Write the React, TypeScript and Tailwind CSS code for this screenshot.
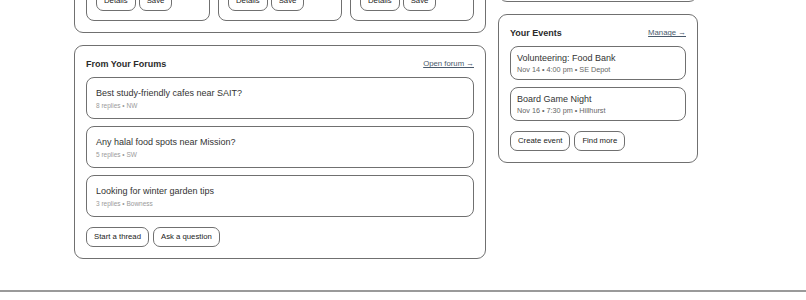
const forumThreads = [
  { title: "Best study-friendly cafes near SAIT?", meta: "8 replies • NW" },
  { title: "Any halal food spots near Mission?", meta: "5 replies • SW" },
  { title: "Looking for winter garden tips", meta: "3 replies • Bowness" },
];

const events = [
  { title: "Volunteering: Food Bank", meta: "Nov 14 • 4:00 pm • SE Depot" },
  { title: "Board Game Night", meta: "Nov 16 • 7:30 pm • Hillhurst" },
];

const picks = [
  { title: "Winter coat drive", meta: "Ends Nov 20" },
  { title: "Bike repair clinic", meta: "Sat • Kensington" },
  { title: "Community potluck", meta: "Sun • Bridgeland" },
];

const Button = ({ label }: { label: string }) => (
  <button className="h-[20px] px-[7px] flex items-center rounded-[7px] border border-[#707070] bg-white text-[7.75px] text-[#222] leading-none whitespace-nowrap">
    {label}
  </button>
);

const CardHeader = ({ title, link }: { title: string; link: string }) => (
  <div className="h-[14px] mb-[6px] flex items-center justify-between">
    <h3 className="text-[9px] font-bold text-[#2b2b2b] leading-none">{title}</h3>
    <a className="text-[7.75px] text-[#4a5a6c] underline leading-none">{link}</a>
  </div>
);

export default function App() {
  return (
    <div
      className="w-[806px] h-[300px] overflow-hidden bg-white"
      style={{ fontFamily: '"Liberation Sans", Arial, sans-serif' }}>
      <div className="-mt-[200px] pl-[74px]">
        <div className="grid grid-cols-[412px_200px] gap-[12px] items-start">
          {/* left column */}
          <div className="flex flex-col gap-[12px]">
            <section className="h-[233px] flex flex-col justify-end border border-[#707070] rounded-[9px] p-[11px]">
              <CardHeader title="Picked For You" link="See all →" />
              <div className="grid grid-cols-3 gap-[8px]">
                {picks.map((p) => (
                  <div key={p.title} className="border border-[#707070] rounded-[8px] p-[9px]">
                    <p className="text-[9px] text-[#333] leading-[12px]">{p.title}</p>
                    <p className="text-[6.5px] text-[#999] leading-[9px] mt-[2px] mb-[8px]">{p.meta}</p>
                    <div className="flex gap-[3px]">
                      <Button label="Details" />
                      <Button label="Save" />
                    </div>
                  </div>
                ))}
              </div>
            </section>

            <section className="border border-[#707070] rounded-[9px] p-[11px]">
              <CardHeader title="From Your Forums" link="Open forum →" />
              <div className="flex flex-col gap-[7px]">
                {forumThreads.map((t) => (
                  <div key={t.title} className="border border-[#707070] rounded-[8px] px-[9px] pt-[9px] pb-[8px]">
                    <p className="text-[9px] text-[#333] leading-[12px]">{t.title}</p>
                    <p className="text-[6.5px] text-[#9a9a9a] leading-[9px] mt-[2px]">{t.meta}</p>
                  </div>
                ))}
              </div>
              <div className="flex gap-[4px] mt-[10px]">
                <Button label="Start a thread" />
                <Button label="Ask a question" />
              </div>
            </section>
          </div>

          {/* right column */}
          <div className="flex flex-col gap-[12px]">
            <section className="h-[202px] flex flex-col justify-end border border-[#707070] rounded-[9px] p-[11px]">
              <CardHeader title="Neighbourhood" link="Edit →" />
              <p className="text-[7.25px] text-[#666] leading-[10px]">Beltline • 2.1 km radius</p>
            </section>

            <section className="border border-[#707070] rounded-[9px] p-[11px]">
              <CardHeader title="Your Events" link="Manage →" />
              <div className="flex flex-col gap-[7px]">
                {events.map((e) => (
                  <div key={e.title} className="border border-[#707070] rounded-[8px] px-[6px] pt-[5px] pb-[4px]">
                    <p className="text-[9px] text-[#333] leading-[12px]">{e.title}</p>
                    <p className="text-[7.25px] text-[#666] leading-[11px]">{e.meta}</p>
                  </div>
                ))}
              </div>
              <div className="flex gap-[4px] mt-[10px]">
                <Button label="Create event" />
                <Button label="Find more" />
              </div>
            </section>
          </div>
        </div>
        <div className="h-[31px]" />
      </div>
      <footer className="border-t-2 border-[#9a9a9a] h-[20px]" />
    </div>
  );
}
